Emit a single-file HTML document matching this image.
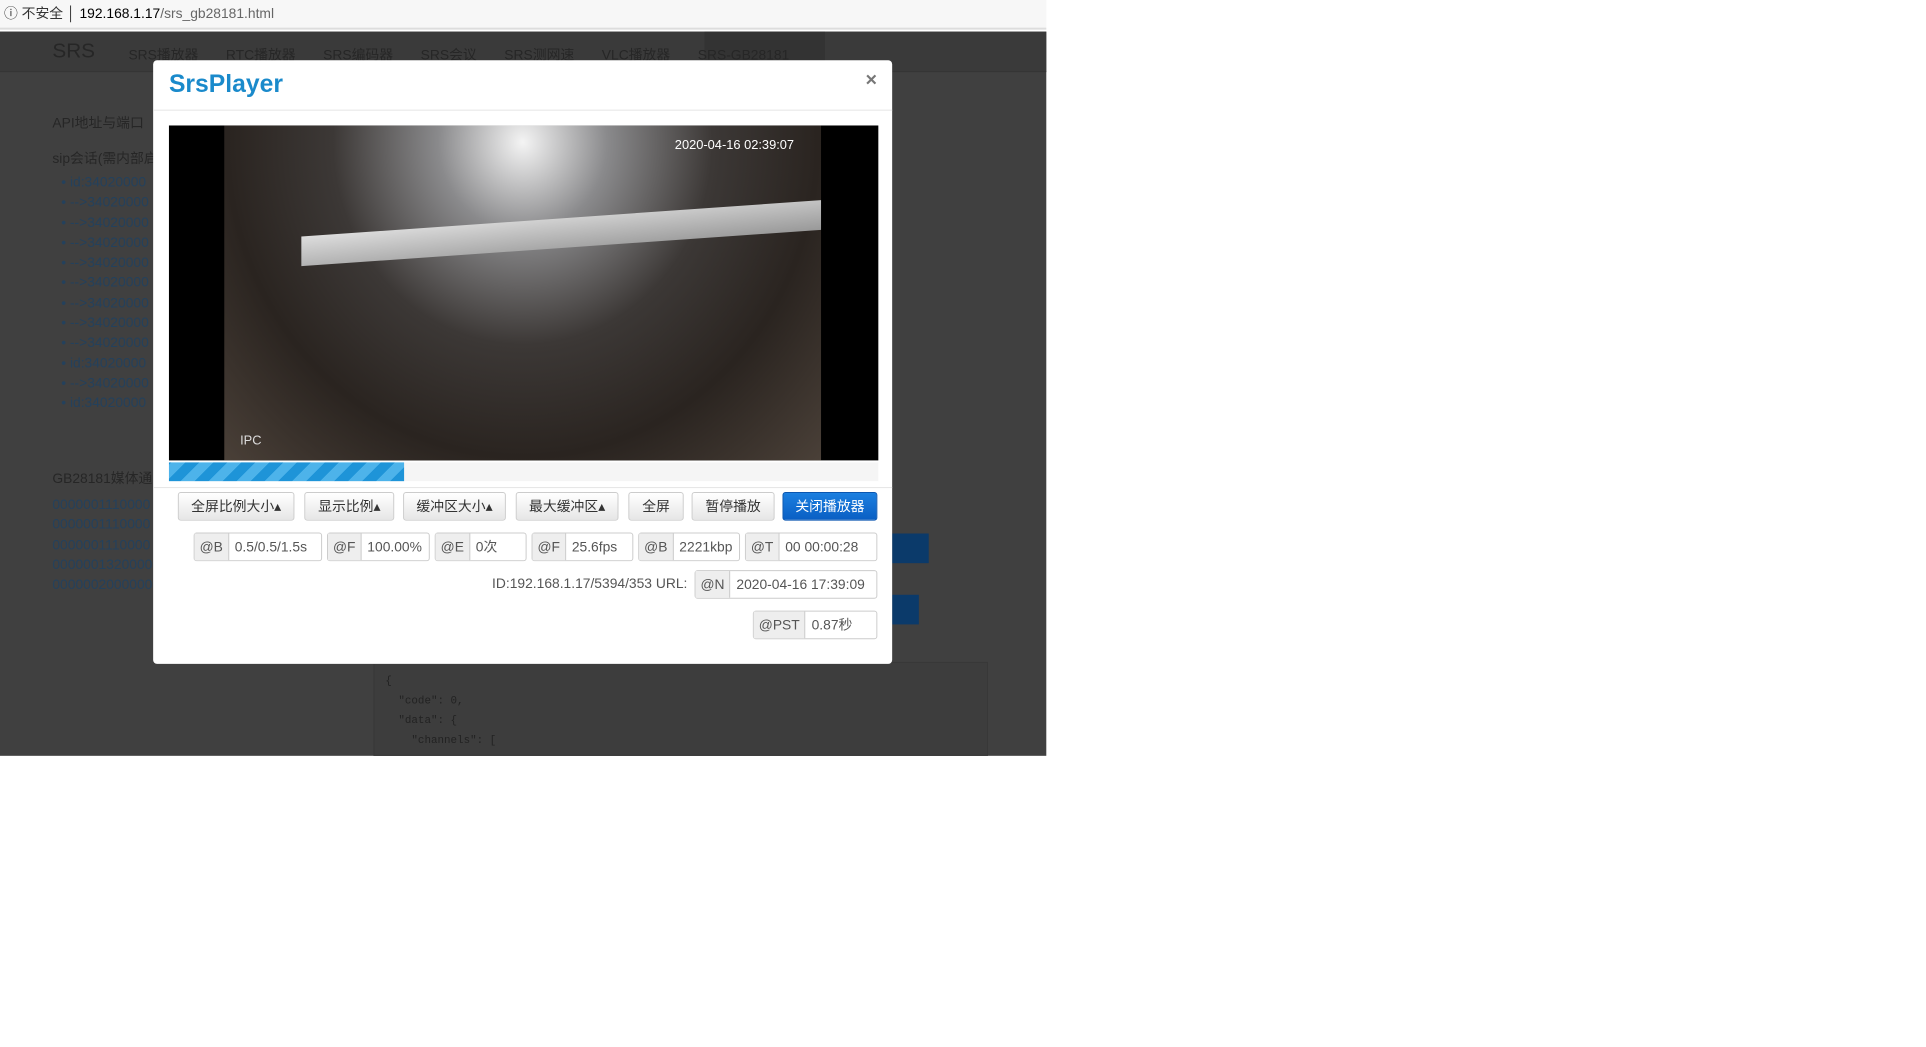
<!DOCTYPE html>
<html><head><meta charset="utf-8"><style>
*{box-sizing:border-box;margin:0;padding:0}
body{width:1926px;height:1044px;background:#fff;font-family:"Liberation Sans","Noto Sans CJK SC",sans-serif;position:relative;overflow:hidden}
#w{position:absolute;left:0;top:0;width:1950px;height:1060px;transform:scale(0.988);transform-origin:0 0}
.abs{position:absolute}
.bar{left:0;top:0;width:1059px;height:30px;background:#f7f7f7;border-bottom:2px solid #ddd;font-size:14px;color:#333;line-height:26px;padding-left:4px}
.bg{left:0;top:32px;width:1059px;height:733px;background:#404040}
.nav{left:0;top:32px;width:1059px;height:41px;background:#3a3a3a;border-bottom:1px solid #353535}
.dim{color:#262626;font-size:14px}
.lnk{color:#24415c;font-size:14px}
.modal{left:155px;top:61px;width:748px;height:611px;background:#fff;border-radius:4px}
.btn{position:absolute;top:498px;height:29px;border:1px solid #ccc;border-radius:3px;background:linear-gradient(#fff,#e6e6e6);font-size:14px;color:#333;text-align:center;line-height:27px}
.ig{position:absolute;height:29px;border:1px solid #ccc;border-radius:3px;display:flex;font-size:14px;color:#555;line-height:27px;background:#fff}
.ig span{background:#eee;border-right:1px solid #ccc;padding:0 5px}
.ig b{font-weight:normal;padding-left:6px}
</style></head><body><div id="w">
<div class="abs bar">ⓘ 不安全 │ <span style="color:#000">192.168.1.17</span><span style="color:#666">/srs_gb28181.html</span></div>
<div class="abs bg"></div>
<div class="abs nav"></div>
<div class="abs" style="left:713px;top:32px;width:122px;height:40px;background:#333"></div>
<div class="abs dim" style="left:53px;top:40px;font-size:21px">SRS</div>
<div class="abs dim" style="left:130px;top:45px;width:720px;word-spacing:24px">SRS播放器 RTC播放器 SRS编码器 SRS会议 SRS测网速 VLC播放器 SRS-GB28181</div>
<div class="abs dim" style="left:53px;top:114px">API地址与端口</div>
<div class="abs dim" style="left:53px;top:150px">sip会话(需内部启</div>
<div class="abs lnk" style="left:62px;top:174px;line-height:20.3px">• id:34020000<br>• -->34020000<br>• -->34020000<br>• -->34020000<br>• -->34020000<br>• -->34020000<br>• -->34020000<br>• -->34020000<br>• -->34020000<br>• id:34020000<br>• -->34020000<br>• id:34020000</div>
<div class="abs dim" style="left:53px;top:474px">GB28181媒体通</div>
<div class="abs lnk" style="left:53px;top:500px;line-height:20.3px">0000001110000<br>0000001110000<br>0000001110000<br>0000001320000<br>0000002000000</div>
<div class="abs" style="left:903px;top:540px;width:37px;height:30px;background:#0b3a6a"></div>
<div class="abs" style="left:903px;top:602px;width:27px;height:30px;background:#0b3a6a"></div>
<div class="abs" style="left:378px;top:670px;width:622px;height:95px;background:#3d3d3d;border:1px solid #383838"></div>
<div class="abs" style="left:390px;top:680px;font-family:'Liberation Mono',monospace;font-size:11px;color:#222;line-height:20px;white-space:pre">{
  "code": 0,
  "data": {
    "channels": [</div>
<div class="abs modal">
 <div class="abs" style="left:16px;top:10px;font-size:25px;font-weight:bold;color:#1a8acb">SrsPlayer</div>
 <div class="abs" style="left:721px;top:0px;font-size:20px;font-weight:bold;color:#777;line-height:40px">×</div>
 <div class="abs" style="left:0;top:50px;width:748px;border-top:1px solid #e5e5e5"></div>
 <div class="abs" style="left:16px;top:66px;width:718px;height:339px;background:#000"></div>
 <div class="abs" style="left:72px;top:66px;width:604px;height:339px;background:radial-gradient(ellipse at 50% 5%,#f4f4f4 0,#8a8a8c 20%,#3c3836 45%,#2a2420 70%,#4a4038 100%)"></div>
 <div class="abs" style="left:150px;top:160px;width:526px;height:30px;background:linear-gradient(178deg,#ddd,#999);transform:skewY(-4deg)"></div>
 <div class="abs" style="left:528px;top:78px;font-size:13px;color:#fff">2020-04-16 02:39:07</div>
 <div class="abs" style="left:88px;top:377px;font-size:13px;color:#ddd">IPC</div>
 <div class="abs" style="left:16px;top:407px;width:718px;height:19px;background:#f5f5f5"></div>
 <div class="abs" style="left:16px;top:407px;width:238px;height:19px;background:repeating-linear-gradient(-45deg,#1e94d8 0 10px,#4db3ea 10px 20px)"></div>
 <div class="abs" style="left:0;top:432px;width:748px;border-top:1px solid #e5e5e5"></div>
</div>
<div class="btn" style="left:180px;width:118px">全屏比例大小▴</div>
<div class="btn" style="left:308px;width:91px">显示比例▴</div>
<div class="btn" style="left:408px;width:104px">缓冲区大小▴</div>
<div class="btn" style="left:522px;width:104px">最大缓冲区▴</div>
<div class="btn" style="left:636px;width:56px">全屏</div>
<div class="btn" style="left:700px;width:84px">暂停播放</div>
<div class="btn" style="left:792px;width:96px;background:linear-gradient(#1b7fe0,#0a5fc4);border-color:#0a56b0;color:#fff">关闭播放器</div>
<div class="ig" style="left:196px;top:539px;width:130px"><span>@B</span><b>0.5/0.5/1.5s</b></div>
<div class="ig" style="left:331px;top:539px;width:104px"><span>@F</span><b>100.00%</b></div>
<div class="ig" style="left:440px;top:539px;width:93px"><span>@E</span><b>0次</b></div>
<div class="ig" style="left:538px;top:539px;width:103px"><span>@F</span><b>25.6fps</b></div>
<div class="ig" style="left:646px;top:539px;width:103px"><span>@B</span><b>2221kbp</b></div>
<div class="ig" style="left:754px;top:539px;width:134px"><span>@T</span><b>00 00:00:28</b></div>
<div class="abs" style="left:498px;top:582px;font-size:14px;color:#555">ID:192.168.1.17/5394/353 URL:</div>
<div class="ig" style="left:703px;top:577px;width:185px"><span>@N</span><b>2020-04-16 17:39:09</b></div>
<div class="ig" style="left:762px;top:618px;width:126px"><span>@PST</span><b>0.87秒</b></div>
</div></body></html>
